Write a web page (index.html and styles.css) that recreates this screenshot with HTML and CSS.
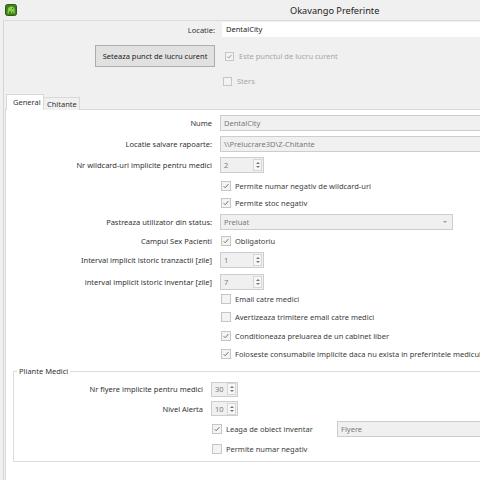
FILE: index.html
```html
<!DOCTYPE html>
<html>
<head>
<meta charset="utf-8">
<title>Okavango Preferinte</title>
<link rel="stylesheet" href="styles.css">
</head>
<body>
<div class="window">
  <div class="titlebar">
    <svg class="appicon" viewBox="0 0 12 12" aria-hidden="true">
      <rect x="0.5" y="0.5" width="11" height="11" rx="2" fill="#3d7f1c" stroke="#2a5e10"/>
      <path d="M2.5 9.5 L2.8 5.5 C3 3.5 4.5 2.5 6.5 2.6 C8.5 2.7 9.6 4 9.6 5.6 L9.6 9.5 L8.3 9.5 L8.2 7.4 L7.2 7.4 L7.1 9.5 L5.9 9.5 L5.8 7.2 C5 7.6 4.4 7.2 4.2 6.4 L4 9.5 Z" fill="#8ccd4c"/>
      <circle cx="7.6" cy="4.6" r="0.6" fill="#2a5e10"/>
    </svg>
    <div class="title">Okavango Preferinte</div>
  </div>
  <div class="frame">
    <div class="toprow row-loc">
      <div class="toplab">Locatie:</div>
      <div class="topctl"><div class="input input-white">DentalCity</div></div>
    </div>
    <div class="toprow row-btn">
      <div class="toplab"><div class="btn">Seteaza punct de lucru curent</div></div>
      <div class="topctl">
        <span class="cb cb-top"><svg viewBox="0 0 10 10"><path d="M2 5.2 L4 7.2 L8 2.6"/></svg></span>
        <span class="cbtext dis">Este punctul de lucru curent</span>
      </div>
    </div>
    <div class="toprow row-sters">
      <div class="toplab"></div>
      <div class="topctl">
        <span class="cb cb-top"></span>
        <span class="cbtext dis">Sters</span>
      </div>
    </div>

    <div class="tabs">
      <div class="tab tab-active">General</div>
      <div class="tab tab-chit">Chitante</div>
    </div>
    <div class="pane">
      <div class="grid">
        <div class="lab">Nume</div>
        <div class="ctl"><div class="input input-long">DentalCity</div></div>

        <div class="lab">Locatie salvare rapoarte:</div>
        <div class="ctl"><div class="input input-long">\\Prelucrare3D\Z-Chitante</div></div>

        <div class="lab">Nr wildcard-uri implicite pentru medici</div>
        <div class="ctl"><div class="spin"><span class="val">2</span><span class="spinbtn"><i class="up"></i><i class="dn"></i></span></div></div>

        <div class="ctl c2"><span class="cb"><svg viewBox="0 0 10 10"><path d="M2 5.2 L4 7.2 L8 2.6"/></svg></span><span class="cbtext">Permite numar negativ de wildcard-uri</span></div>

        <div class="ctl c2"><span class="cb"><svg viewBox="0 0 10 10"><path d="M2 5.2 L4 7.2 L8 2.6"/></svg></span><span class="cbtext">Permite stoc negativ</span></div>

        <div class="lab">Pastreaza utilizator din status:</div>
        <div class="ctl"><div class="combo"><span>Preluat</span><i class="arrow"></i></div></div>

        <div class="lab">Campul Sex Pacienti</div>
        <div class="ctl"><span class="cb"><svg viewBox="0 0 10 10"><path d="M2 5.2 L4 7.2 L8 2.6"/></svg></span><span class="cbtext">Obligatoriu</span></div>

        <div class="lab">Interval implicit istoric tranzactii [zile]</div>
        <div class="ctl"><div class="spin"><span class="val">1</span><span class="spinbtn"><i class="up"></i><i class="dn"></i></span></div></div>

        <div class="lab">interval implicit istoric inventar [zile]</div>
        <div class="ctl"><div class="spin"><span class="val">7</span><span class="spinbtn"><i class="up"></i><i class="dn"></i></span></div></div>

        <div class="ctl c2"><span class="cb"></span><span class="cbtext">Email catre medici</span></div>

        <div class="ctl c2"><span class="cb"></span><span class="cbtext">Avertizeaza trimitere email catre medici</span></div>

        <div class="ctl c2"><span class="cb"><svg viewBox="0 0 10 10"><path d="M2 5.2 L4 7.2 L8 2.6"/></svg></span><span class="cbtext">Conditioneaza preluarea de un cabinet liber</span></div>

        <div class="ctl c2"><span class="cb"><svg viewBox="0 0 10 10"><path d="M2 5.2 L4 7.2 L8 2.6"/></svg></span><span class="cbtext">Foloseste consumabile implicite daca nu exista in preferintele medicului</span></div>
      </div>

      <fieldset class="group">
        <legend>Pliante Medici</legend>
        <div class="fgrid">
          <div class="lab">Nr flyere implicite pentru medici</div>
          <div class="ctl"><div class="spin spin-small"><span class="val">30</span><span class="spinbtn"><i class="up"></i><i class="dn"></i></span></div></div>

          <div class="lab">Nivel Alerta</div>
          <div class="ctl"><div class="spin spin-small"><span class="val">10</span><span class="spinbtn"><i class="up"></i><i class="dn"></i></span></div></div>

          <div class="ctl c2">
            <span class="cbwrap"><span class="cb cb-f"><svg viewBox="0 0 10 10"><path d="M2 5.2 L4 7.2 L8 2.6"/></svg></span><span class="cbtext">Leaga de obiect inventar</span></span>
            <div class="input input-flyere">Flyere</div>
          </div>

          <div class="ctl c2"><span class="cb cb-f"></span><span class="cbtext">Permite numar negativ</span></div>
        </div>
      </fieldset>
    </div>
  </div>
</div>
</body>
</html>
```

FILE: styles.css
```css
* { box-sizing: border-box; }
html, body { margin: 0; padding: 0; }
body {
  width: 480px;
  height: 480px;
  overflow: hidden;
  background: #f0f0f0;
  font-family: "Noto Sans", "DejaVu Sans", sans-serif;
  font-size: 7.5px;
  color: #333;
}
.window { width: 668px; }

.titlebar {
  height: 20px;
  display: flex;
  align-items: center;
}
.appicon { width: 12px; height: 12px; margin-left: 5px; margin-top: -1px; flex: none; }
.title { font-size: 9.2px; margin-left: 273px; color: #222; }

.frame {
  margin-left: 3px;
  border-left: 1px solid #d6d6d6;
  border-top: 1px solid #dcdcdc;
  background: #f0f0f0;
}

.toprow { display: flex; align-items: center; }
.row-loc { height: 15px; margin-top: 1px; }
.row-btn { height: 22px; margin-top: 8px; }
.row-sters { height: 18px; margin-top: 5px; }
.toplab {
  width: 211px;
  flex: none;
  display: flex;
  justify-content: flex-end;
  white-space: nowrap;
  margin-right: 7px;
  color: #333;
}
.row-btn .toplab { margin-right: 9px; }
.topctl { display: flex; align-items: center; flex: 1; }
.row-btn .topctl, .row-sters .topctl { padding-left: 1px; }

.btn {
  width: 120px;
  height: 22px;
  border: 1px solid #adadad;
  background: #e1e1e1;
  color: #222;
  display: flex;
  align-items: center;
  justify-content: center;
  white-space: nowrap;
}

.input {
  height: 16px;
  border: 1px solid #cdcdcd;
  background: #f0f0f0;
  color: #7a7a7a;
  padding-left: 3px;
  line-height: 14px;
  white-space: nowrap;
}
.input-white {
  width: 446px;
  height: 15px;
  background: #fff;
  border-color: #fff;
  color: #222;
  line-height: 13px;
}
.input-long { width: 440px; }
.input-flyere { width: 320px; }

.cb {
  width: 10px;
  height: 10px;
  border: 1px solid #c6c6c6;
  background: #f3f3f3;
  flex: none;
  display: flex;
}
.cb svg { width: 8px; height: 8px; }
.cb path { fill: none; stroke: #707070; stroke-width: 1.2; }
.cb-top { width: 9px; height: 9px; }
.cb-top svg { width: 7px; height: 7px; }
.cb-top path { stroke: #8a8a8a; }
.cbtext { margin-left: 4px; white-space: nowrap; color: #3c3c3c; }
.cbtext.dis { color: #a6a6a6; margin-left: 5px; }

.tabs {
  display: flex;
  align-items: flex-end;
  margin-left: 2px;
  margin-top: 4px;
  height: 16px;
  margin-bottom: -1px;
  position: relative;
  z-index: 1;
}
.tab {
  height: 13px;
  border: 1px solid #d9d9d9;
  border-bottom: none;
  background: #f0f0f0;
  white-space: nowrap;
  display: flex;
  align-items: center;
  color: #333;
}
.tab-active {
  width: 38px;
  height: 16px;
  background: #fff;
  padding-left: 6px;
  padding-bottom: 1px;
}
.tab-chit {
  width: 36px;
  border-left: none;
  padding-left: 3px;
}

.pane {
  margin-left: 1px;
  border: 1px solid #d9d9d9;
  background: #fff;
  height: 400px;
  padding-top: 3px;
}

.grid {
  display: grid;
  grid-template-columns: 206px 1fr;
  column-gap: 8px;
  grid-template-rows: 20px 21px 22px 19px 15px 23px 16px 22px 21px 14px 22px 16px 20px;
  align-items: center;
}
.lab { text-align: right; white-space: nowrap; color: #333; }
.ctl { display: flex; align-items: center; white-space: nowrap; }
.c2 { grid-column: 2; }
.grid .cb { margin-left: 1px; }

.spin {
  width: 44px;
  height: 16px;
  border: 1px solid #cdcdcd;
  background: #f0f0f0;
  color: #7a7a7a;
  display: flex;
  align-items: center;
  justify-content: space-between;
  padding-left: 3px;
  padding-right: 1px;
}
.spin-small { width: 27px; height: 15px; }
.spinbtn {
  width: 9px;
  height: 12px;
  border: 1px solid #d6d6d6;
  background: #f7f7f7;
  display: flex;
  flex-direction: column;
  align-items: center;
  justify-content: space-around;
  padding: 1px 0;
}
.spinbtn i { display: block; width: 0; height: 0; border-left: 2px solid transparent; border-right: 2px solid transparent; }
.spinbtn .up { border-bottom: 2px solid #777; }
.spinbtn .dn { border-top: 2px solid #777; }

.combo {
  width: 233px;
  height: 16px;
  border: 1px solid #cdcdcd;
  background: #f0f0f0;
  color: #7a7a7a;
  display: flex;
  align-items: center;
  justify-content: space-between;
  padding: 0 5px 0 3px;
}
.combo .arrow {
  width: 0; height: 0;
  border-left: 2px solid transparent;
  border-right: 2px solid transparent;
  border-top: 2px solid #999;
}

.group {
  margin: 2px 0 0 7px;
  padding: 0 0 3px 0;
  border: 1px solid #dcdcdc;
  width: 640px;
}
.group legend {
  padding: 0 2px;
  margin-left: 3px;
  line-height: 10px;
  color: #333;
}
.fgrid {
  display: grid;
  grid-template-columns: 189px 1fr;
  column-gap: 8px;
  grid-template-rows: 20px 19px 22px 18px;
  align-items: center;
  margin-top: 3px;
}
.fgrid .cb { margin-left: 1px; }
.cbwrap { display: flex; align-items: center; width: 126px; flex: none; }
```
